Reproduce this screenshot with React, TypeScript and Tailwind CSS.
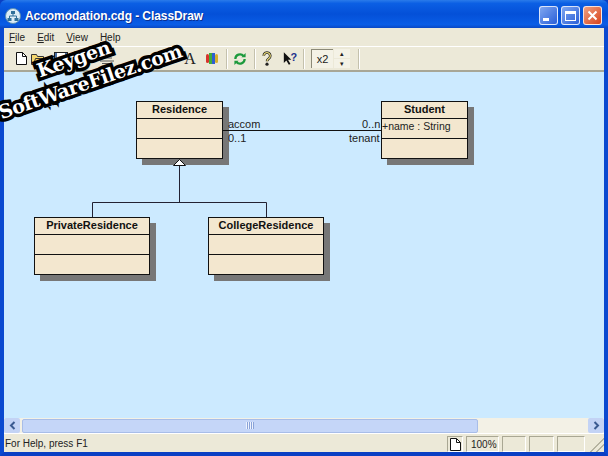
const FONT = { fontFamily: '"Liberation Sans", Arial, sans-serif' };

function UmlClass({ name, attr, className }: { name: string; attr?: string; className: string }) {
  return (
    <div className={`absolute flex flex-col border border-[#111] bg-[#f3e7cf] shadow-[6px_6px_0_#777] ${className}`}>
      <div className="h-[17px] shrink-0 border-b border-[#111] text-center text-[11px] leading-[15px] font-bold text-[#111]">{name}</div>
      <div className="h-[20px] shrink-0 border-b border-[#111] text-[10.5px] leading-[15px] text-[#222]">{attr}</div>
      <div className="flex-1" />
    </div>
  );
}

function Label({ children, className }: { children: string; className: string }) {
  return <span className={`absolute text-[11px] leading-[12px] text-[#222] ${className}`}>{children}</span>;
}

function Sep({ className = "" }: { className?: string }) {
  return <div className={`h-[20px] w-[2px] shrink-0 border-l border-r border-l-[#c4c1ad] border-r-white ${className}`} />;
}

function Doc() {
  return (
    <svg width="11" height="13" viewBox="0 0 11 13">
      <path d="M.5.5h6l4 4v8H.5z" fill="#fff" stroke="#111" />
      <path d="M6.500.5v4h4" fill="none" stroke="#111" />
    </svg>
  );
}

function Tool({ w, children, className = "" }: { w: number; children?: React.ReactNode; className?: string }) {
  return <div className={`flex h-[22px] shrink-0 items-center justify-center ${className}`} style={{ width: w }}>{children}</div>;
}

function WinBtn({ children, className }: { children: React.ReactNode; className: string }) {
  return <div className={`flex h-[19px] w-[19px] items-center justify-center rounded-[3px] border border-white/80 ${className}`}>{children}</div>;
}

function StatusCell({ className, children }: { className: string; children?: React.ReactNode }) {
  return <div className={`flex h-[16px] shrink-0 items-center border-t border-l border-t-[#a9a793] border-l-[#a9a793] border-b border-r border-b-white border-r-white ${className}`}>{children}</div>;
}

export default function App() {
  return (
    <div className="relative flex h-[456px] w-[608px] flex-col overflow-hidden bg-[#0a3fc4]" style={FONT}>
      {/* Title bar */}
      <div className="flex h-[28px] shrink-0 items-center rounded-t-[6px] bg-[linear-gradient(180deg,#2a7bea_0%,#0b5fe4_12%,#0450d8_50%,#0a5de6_88%,#0a48c4_100%)] pt-[3px] pr-[6px] pl-[5px]">
        <svg width="16" height="16" viewBox="0 0 16 16" className="mr-[4px] shrink-0">
          <circle cx="8" cy="8" r="7.500" fill="#dcecf6" stroke="#5b8fb5" />
          <rect x="6" y="3" width="4" height="3" fill="#2f6f9a" />
          <rect x="2.500" y="10" width="4" height="3" fill="#2f6f9a" />
          <rect x="9.500" y="10" width="4" height="3" fill="#2f6f9a" />
          <path d="M8 6v2M4.500 10V8h7v2" fill="none" stroke="#2f6f9a" />
        </svg>
        <span className="flex-1 text-[12px] font-bold tracking-[-0.07px] whitespace-nowrap text-white [text-shadow:1px_1px_0_#0a2f90]">Accomodation.cdg - ClassDraw</span>
        <div className="flex gap-[3px]">
          <WinBtn className="items-end bg-[linear-gradient(135deg,#7fa6f0,#2a5fd8)] pr-[5px] pb-[3px]"><div className="h-[3px] w-[6px] bg-white" /></WinBtn>
          <WinBtn className="bg-[linear-gradient(135deg,#7fa6f0,#2a5fd8)]"><div className="h-[10px] w-[11px] border border-t-[3px] border-white" /></WinBtn>
          <WinBtn className="bg-[linear-gradient(135deg,#f0a080,#d8431c)]">
            <svg width="11" height="11" viewBox="0 0 11 11"><path d="M1.500 1.500l8 8M9.500 1.500l-8 8" stroke="#fff" strokeWidth="2" /></svg>
          </WinBtn>
        </div>
      </div>

      <div className="flex min-h-0 flex-1 flex-col border-x-[4px] border-b-[4px] border-x-[#0a49d0] border-b-[#0a3fc4] bg-[#ece9d8]">
        {/* Menu */}
        <div className="flex h-[18px] shrink-0 items-center gap-[12px] pl-[5px] text-[10px] text-[#222]">
          <span><u>F</u>ile</span>
          <span><u>E</u>dit</span>
          <span><u>V</u>iew</span>
          <span><u>H</u>elp</span>
        </div>
        {/* Toolbar */}
        <div className="flex h-[26px] shrink-0 items-center border-t border-b-[2px] border-t-white border-b-[#a8a797] pl-[12px]">
          <Tool w={11}><Doc /></Tool>
          <Tool w={23}>
            <svg width="16" height="13" viewBox="0 0 16 13"><path d="M.5 12.500v-10h5l1 2h6v8zM2.500 12.500l2-6h11l-2.500 6z" fill="#f5d76e" stroke="#333" /></svg>
          </Tool>
          <Tool w={22}>
            <svg width="14" height="14" viewBox="0 0 14 14"><rect x=".5" y=".5" width="13" height="13" fill="#4a6fa5" stroke="#222" /><rect x="3" y="1" width="8" height="5" fill="#fff" /></svg>
          </Tool>
          <Tool w={22}>
            <svg width="14" height="12" viewBox="0 0 14 12"><path d="M2 1h10v4H2zM0 5h14v6H0z" fill="#999" stroke="#333" strokeWidth=".6" /></svg>
          </Tool>
          <Tool w={26}>
            <svg width="16" height="10" viewBox="0 0 16 10"><path d="M1 1h14M3 4h10M1 7h14M3 9.500h10" stroke="#555" fill="none" /></svg>
          </Tool>
          <Tool w={30} />
          <Tool w={26}>
            <svg width="14" height="14" viewBox="0 0 14 14"><path d="M2 12 12 2" stroke="#555" strokeWidth="2" /></svg>
          </Tool>
          <Tool w={28}><span className="text-[16px] leading-none text-[#222]" style={{ fontFamily: '"Liberation Serif", serif' }}>A</span></Tool>
          <Tool w={16}>
            <svg width="12" height="11" viewBox="0 0 12 11">
              <rect x="0" y="1" width="3" height="9" rx="1.500" fill="#d8342c" />
              <rect x="3" y="0" width="3" height="11" fill="#3fae3c" />
              <rect x="6" y="0" width="3" height="11" fill="#2f5fd0" />
              <rect x="9" y="1" width="3" height="9" rx="1.500" fill="#d8b02c" />
            </svg>
          </Tool>
          <Sep className="mr-[3px] ml-[6px]" />
          <Tool w={18}>
            <svg width="14" height="14" viewBox="0 0 15 15"><path d="M12.500 7.500a5 5 0 0 1-8.800 3.200M2.500 7.500a5 5 0 0 1 8.800-3.200" fill="none" stroke="#1c9a3c" strokeWidth="2.400" /><path d="M9 5.500h4.500V1zM6 9.500H1.500V14z" fill="#1c9a3c" /></svg>
          </Tool>
          <Sep className="mr-[3px] ml-[5px]" />
          <Tool w={16}>
            <svg width="12" height="15" viewBox="0 0 12 16"><path d="M2.500 5a3.500 3.500 0 1 1 5.500 3c-1.200.8-2 1.300-2 3" fill="none" stroke="#222" strokeWidth="2.800" /><path d="M2.500 5a3.500 3.500 0 1 1 5.500 3c-1.200.8-2 1.300-2 3" fill="none" stroke="#f3e27a" strokeWidth="1.200" /><circle cx="6" cy="14" r="1.700" fill="#222" /></svg>
          </Tool>
          <Tool w={26} className="ml-[2px]">
            <svg width="15" height="15" viewBox="0 0 18 17"><path d="M1 1v13l3-3 3 5 2-1-3-5h4z" fill="#111" /><text x="9" y="11" fontSize="13" fontWeight="700" fill="#20308c" style={FONT}>?</text></svg>
          </Tool>
          <Sep className="mr-[3px]" />
          <div className="ml-[3px] flex h-[19px] w-[22px] shrink-0 items-center justify-center border-t border-l border-t-[#8c8a78] border-l-[#8c8a78] bg-[#f4f2e6] text-[11px] text-[#222]">x2</div>
          <div className="ml-[1px] flex h-[19px] w-[16px] shrink-0 flex-col gap-[1px]">
            <div className="flex h-[9px] items-center justify-center bg-[#f4f2e6] text-[7px] leading-none text-[#222]">▴</div>
            <div className="flex h-[9px] items-center justify-center bg-[#f4f2e6] text-[7px] leading-none text-[#222]">▾</div>
          </div>
          <Sep className="ml-[8px]" />
        </div>

        {/* Canvas */}
        <div className="relative min-h-0 flex-1 bg-[#cceaff]">
          <UmlClass name="Residence" className="top-[29px] left-[132px] h-[58px] w-[87px]" />
          <UmlClass name="Student" attr="+name : String" className="top-[29px] left-[377px] h-[58px] w-[87px]" />
          <UmlClass name="PrivateResidence" className="top-[145px] left-[30px] h-[58px] w-[116px]" />
          <UmlClass name="CollegeResidence" className="top-[145px] left-[204px] h-[58px] w-[116px]" />
          <svg width="600" height="345" className="absolute top-0 left-0">
            <path d="M219 58.500H377" stroke="#111" fill="none" />
            <path d="M175.500 93.500v37M88.500 145v-14.500H262.500V145" stroke="#223" fill="none" />
            <path d="M175.500 87.500 169.500 93.500H181.500z" fill="#fff" stroke="#111" />
          </svg>
          <Label className="top-[46px] left-[224px]">accom</Label>
          <Label className="top-[60px] left-[224px]">0..1</Label>
          <Label className="top-[46px] left-[358px]">0..n</Label>
          <Label className="top-[60px] left-[345px]">tenant</Label>
        </div>

        {/* Scrollbar */}
        <div className="flex h-[15px] shrink-0 items-center bg-[#f3f1e6]">
          <div className="flex h-[15px] w-[16px] items-center justify-center rounded-[2px] bg-[#c3d3f5]">
            <svg width="7" height="9" viewBox="0 0 7 9"><path d="M5.500 1 2 4.500 5.500 8" fill="none" stroke="#3a5a90" strokeWidth="2" /></svg>
          </div>
          <div className="ml-[2px] flex h-[14px] w-[456px] items-center justify-center rounded-[2px] border border-[#a8bde8] bg-[#c5d6f8]">
            <div className="h-[7px] w-[8px] bg-[repeating-linear-gradient(90deg,#eef3fe_0_1px,#8aa3d8_1px_2px)]" />
          </div>
          <div className="flex-1" />
          <div className="flex h-[15px] w-[16px] items-center justify-center rounded-[2px] bg-[#c3d3f5]">
            <svg width="7" height="9" viewBox="0 0 7 9"><path d="M1.500 1 5 4.500 1.500 8" fill="none" stroke="#3a5a90" strokeWidth="2" /></svg>
          </div>
        </div>

        {/* Status bar */}
        <div className="flex h-[19px] shrink-0 items-end gap-[3px] border-t border-t-white pl-[1px] text-[10px] text-[#222]">
          <span className="flex-1 pb-[1px]">For Help, press F1</span>
          <StatusCell className="w-[16px] justify-center"><Doc /></StatusCell>
          <StatusCell className="w-[33px] pl-[4px]">100%</StatusCell>
          <StatusCell className="w-[24px]" />
          <StatusCell className="w-[25px]" />
          <StatusCell className="w-[28px]" />
          <div className="h-[16px] w-[16px] shrink-0 bg-[linear-gradient(135deg,transparent_55%,#b5b3a0_55%_62%,transparent_62%_72%,#b5b3a0_72%_79%,transparent_79%)]" />
        </div>
      </div>

      {/* Watermark */}
      <div className="pointer-events-none absolute top-[42px] left-[-14px] flex w-[200px] origin-center rotate-[-19deg] flex-col items-center font-bold tracking-[-0.4px] whitespace-nowrap text-white [-webkit-text-stroke:7px_#000] [paint-order:stroke_fill]" style={{ fontFamily: '"DejaVu Serif", serif' }}>
        <span className="pr-[17px] text-[19px] leading-[27px]">Keygen</span>
        <span className="text-[19px] leading-[27px]">SoftWareFilez.com</span>
      </div>
    </div>
  );
}
